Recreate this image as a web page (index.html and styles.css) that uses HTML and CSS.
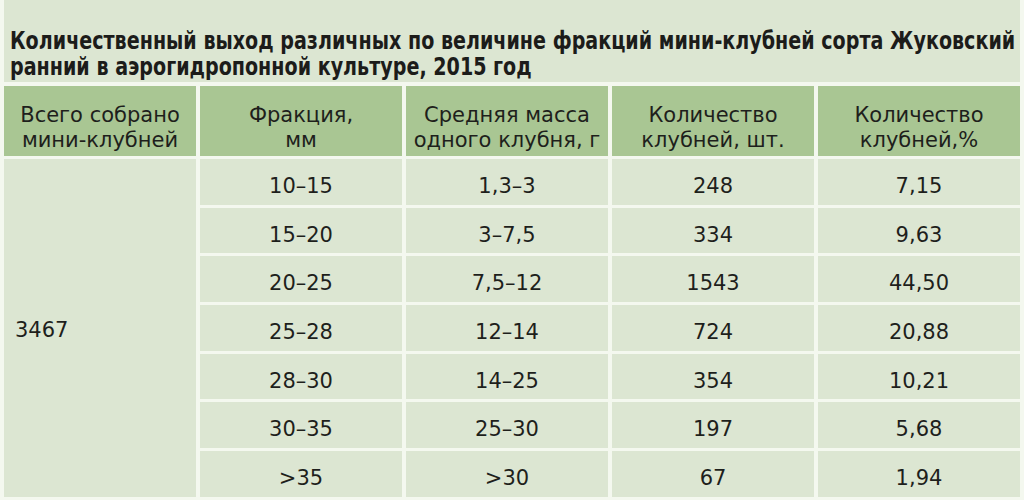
FILE: index.html
```html
<!DOCTYPE html>
<html lang="ru">
<head>
<meta charset="utf-8">
<link rel="stylesheet" href="styles.css">
</head>
<body>
<div class="panel">
  <h1 class="title"><span class="title-text">Количественный выход различных по величине фракций мини-клубней сорта Жуковский<br>ранний в аэрогидропонной культуре, 2015 год</span></h1>
  <div class="table">
    <div class="th">Всего собрано<br>мини-клубней</div>
    <div class="th">Фракция,<br>мм</div>
    <div class="th">Средняя масса<br>одного клубня, г</div>
    <div class="th">Количество<br>клубней, шт.</div>
    <div class="th">Количество<br>клубней,%</div>

    <div class="td total">3467</div>
    <div class="td">10–15</div><div class="td">1,3–3</div><div class="td">248</div><div class="td">7,15</div>
    <div class="td">15–20</div><div class="td">3–7,5</div><div class="td">334</div><div class="td">9,63</div>
    <div class="td">20–25</div><div class="td">7,5–12</div><div class="td">1543</div><div class="td">44,50</div>
    <div class="td">25–28</div><div class="td">12–14</div><div class="td">724</div><div class="td">20,88</div>
    <div class="td">28–30</div><div class="td">14–25</div><div class="td">354</div><div class="td">10,21</div>
    <div class="td">30–35</div><div class="td">25–30</div><div class="td">197</div><div class="td">5,68</div>
    <div class="td">&gt;35</div><div class="td">&gt;30</div><div class="td">67</div><div class="td">1,94</div>
  </div>
</div>
</body>
</html>
```

FILE: styles.css
```css
html, body {
  margin: 0;
  padding: 0;
  background: #f4f8ef;
  width: 1024px;
  height: 500px;
  overflow: hidden;
}

.panel {
  width: 1016px;
  margin-left: 4px;
  display: flex;
  flex-direction: column;
  gap: 4px;
}

.title {
  margin: 0;
  height: 82px;
  box-sizing: border-box;
  padding: 28px 0 0 6px;
  background: #dce6d2;
  font-family: "DejaVu Sans Condensed", "Liberation Sans Narrow", "Roboto", sans-serif;
  font-weight: bold;
  font-size: 24px;
  line-height: 26px;
  color: #1c1c1a;
  overflow: hidden;
}

.title-text {
  display: block;
  white-space: nowrap;
  transform: scaleX(0.885);
  transform-origin: left top;
}

.table {
  display: grid;
  grid-template-columns: 192px repeat(4, 202px);
  grid-template-rows: 70px repeat(7, 45.7px);
  column-gap: 4px;
  row-gap: 3px;
  font-family: "DejaVu Sans", "Liberation Sans", sans-serif;
  font-size: 21px;
  color: #1e1f1c;
}

.th {
  background: #a9c693;
  display: flex;
  align-items: center;
  justify-content: center;
  text-align: center;
  line-height: 25px;
  padding-top: 13px;
  box-sizing: border-box;
}

.td {
  background: #dce6d2;
  display: flex;
  align-items: center;
  justify-content: center;
  padding-top: 8px;
  box-sizing: border-box;
}

.total {
  grid-row: 2 / span 7;
  justify-content: flex-start;
  padding-left: 11px;
  padding-top: 4px;
}
```
